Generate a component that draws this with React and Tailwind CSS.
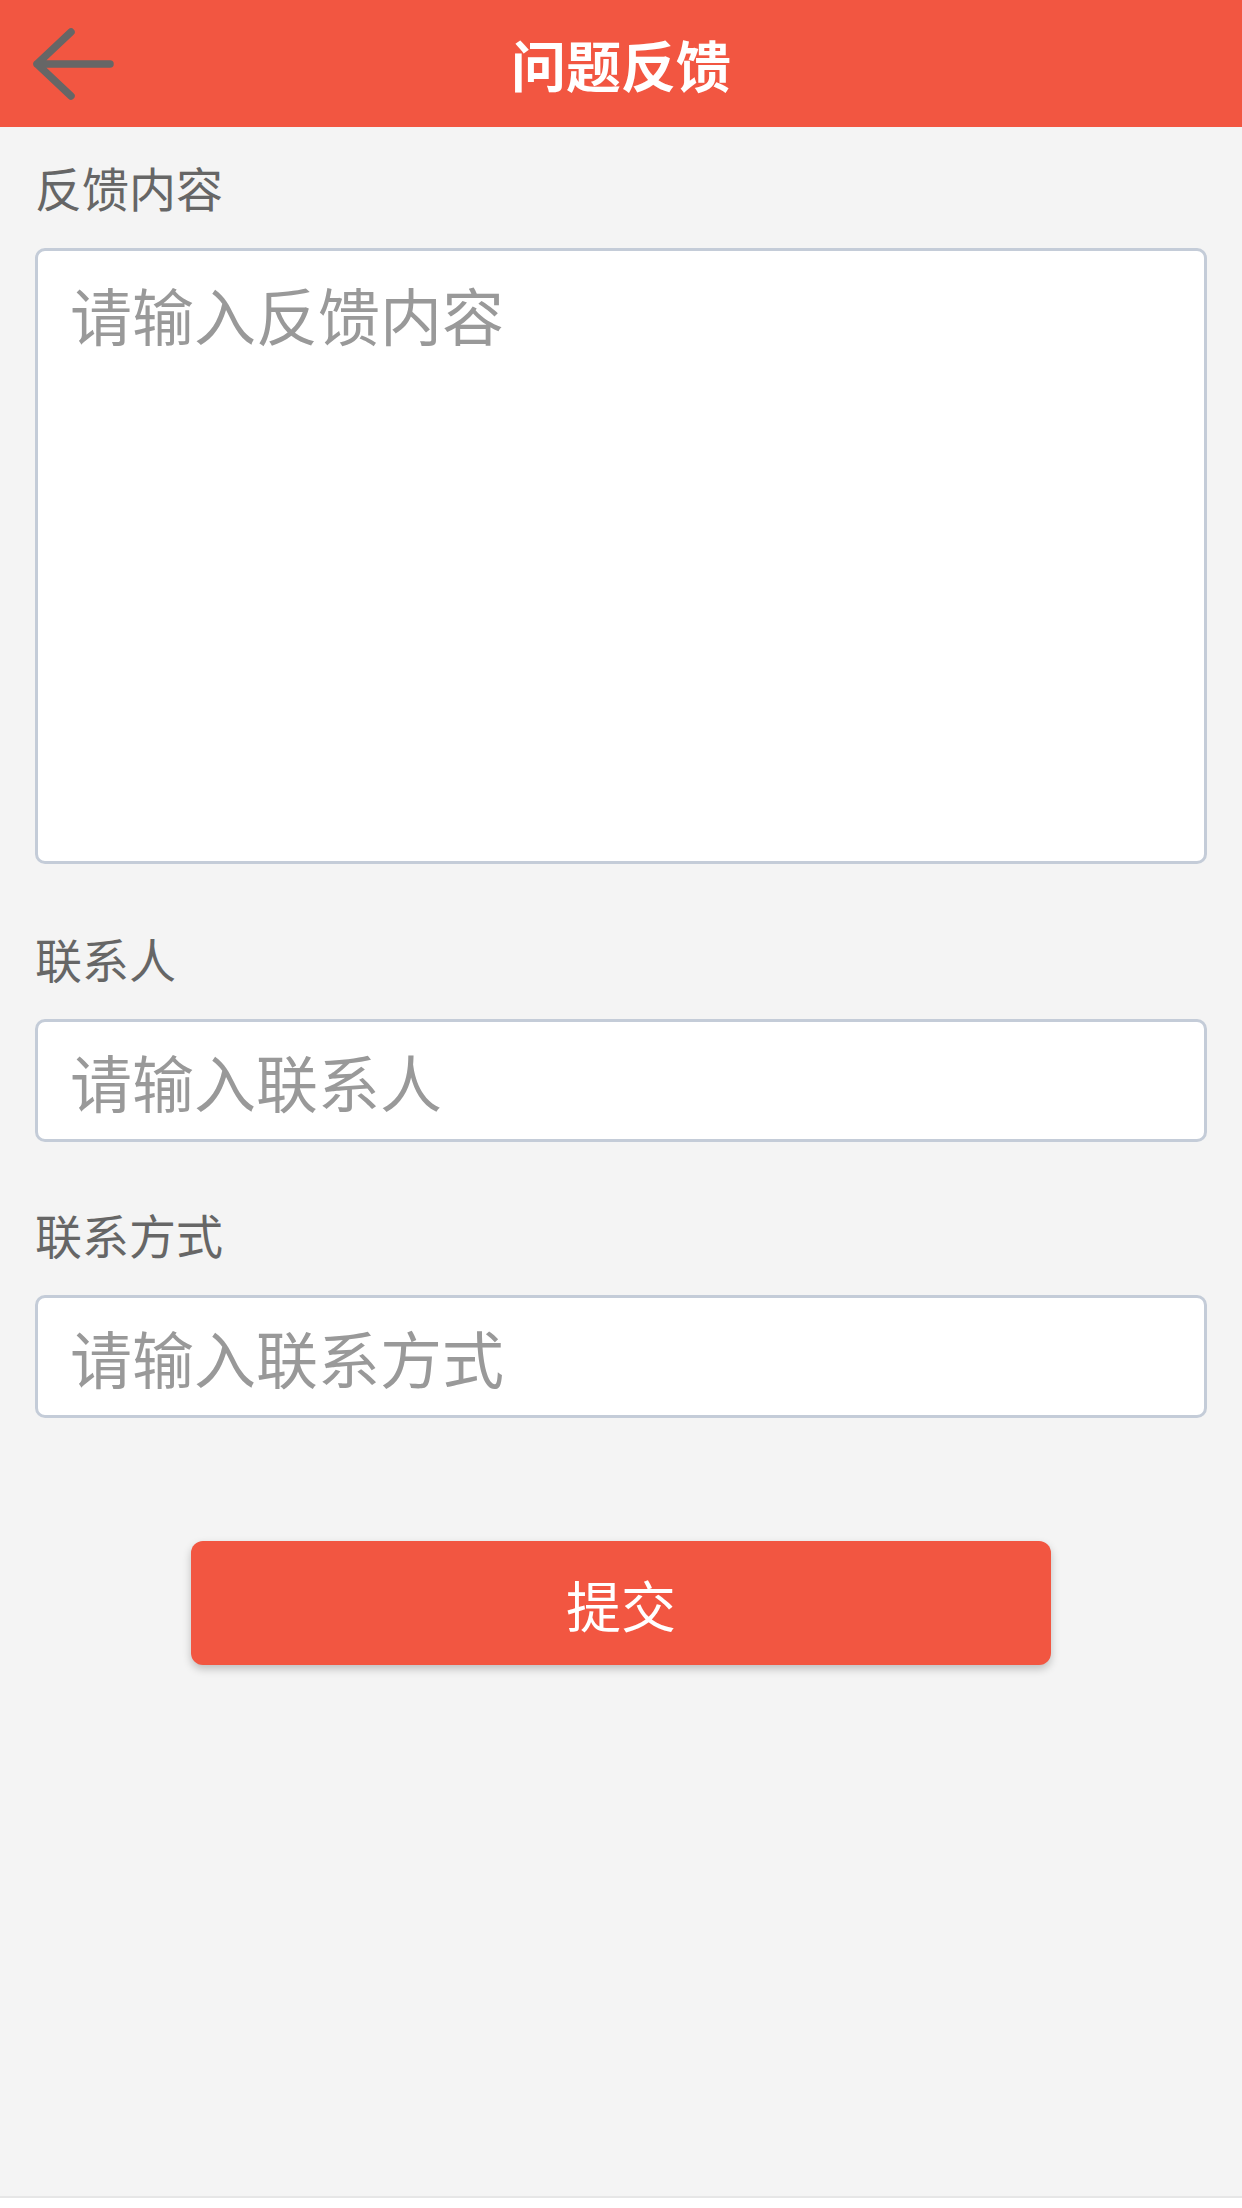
import React from 'react';

const font = { fontFamily: '"Noto Sans CJK SC", "Noto Sans", sans-serif' };

const Label = ({ children, top }) => (
  <div className={`${top} mb-[38px] text-[47px] leading-[47px] text-[#666666]`}>{children}</div>
);

const App = () => {
  const [content, setContent] = React.useState('');
  const [name, setName] = React.useState('');
  const [phone, setPhone] = React.useState('');

  return (
    <div className="w-[1242px] h-[2208px] bg-white flex flex-col" style={font}>
      {/* header */}
      <div className="h-[127px] bg-[#f25641] flex items-center relative shrink-0">
        <button className="absolute left-0 top-0 h-[127px] w-[140px] flex items-center pl-[30px]">
          <svg width="90" height="76" viewBox="0 0 90 76" fill="none">
            <path
              d="M80 38H7M41 6L7 38l34 32"
              stroke="#666666"
              strokeWidth="7.5"
              strokeLinecap="round"
              strokeLinejoin="round"
            />
          </svg>
        </button>
        <h1 className="w-full text-center text-white font-bold text-[55px] leading-none">问题反馈</h1>
      </div>

      {/* form */}
      <div className="flex-1 bg-[#f4f4f4] border-b-2 border-[#e6e6e6] px-[35px] flex flex-col">
        <Label top="mt-[36px]">反馈内容</Label>
        <textarea
          value={content}
          onChange={(e) => setContent(e.target.value)}
          placeholder="请输入反馈内容"
          className="h-[616px] w-full resize-none bg-white border-[3px] border-[#c4ccd8] rounded-[10px] px-[32px] pt-[26px] text-[62px] leading-[74px] text-[#333] placeholder:text-[#999999] outline-none"
        />

        <Label top="mt-[70px]">联系人</Label>
        <input
          value={name}
          onChange={(e) => setName(e.target.value)}
          placeholder="请输入联系人"
          className="h-[123px] w-full bg-white border-[3px] border-[#c4ccd8] rounded-[10px] px-[32px] text-[62px] text-[#333] placeholder:text-[#999999] outline-none"
        />

        <Label top="mt-[68px]">联系方式</Label>
        <input
          value={phone}
          onChange={(e) => setPhone(e.target.value)}
          placeholder="请输入联系方式"
          className="h-[123px] w-full bg-white border-[3px] border-[#c4ccd8] rounded-[10px] px-[32px] text-[62px] text-[#333] placeholder:text-[#999999] outline-none"
        />

        <div className="flex justify-center mt-[123px]">
          <button className="w-[860px] h-[124px] bg-[#f25641] rounded-[12px] text-white text-[55px] shadow-[0_4px_8px_rgba(0,0,0,0.22)]">
            提交
          </button>
        </div>
      </div>
      <div className="h-[10px] bg-white shrink-0"></div>
    </div>
  );
};

export default App;
